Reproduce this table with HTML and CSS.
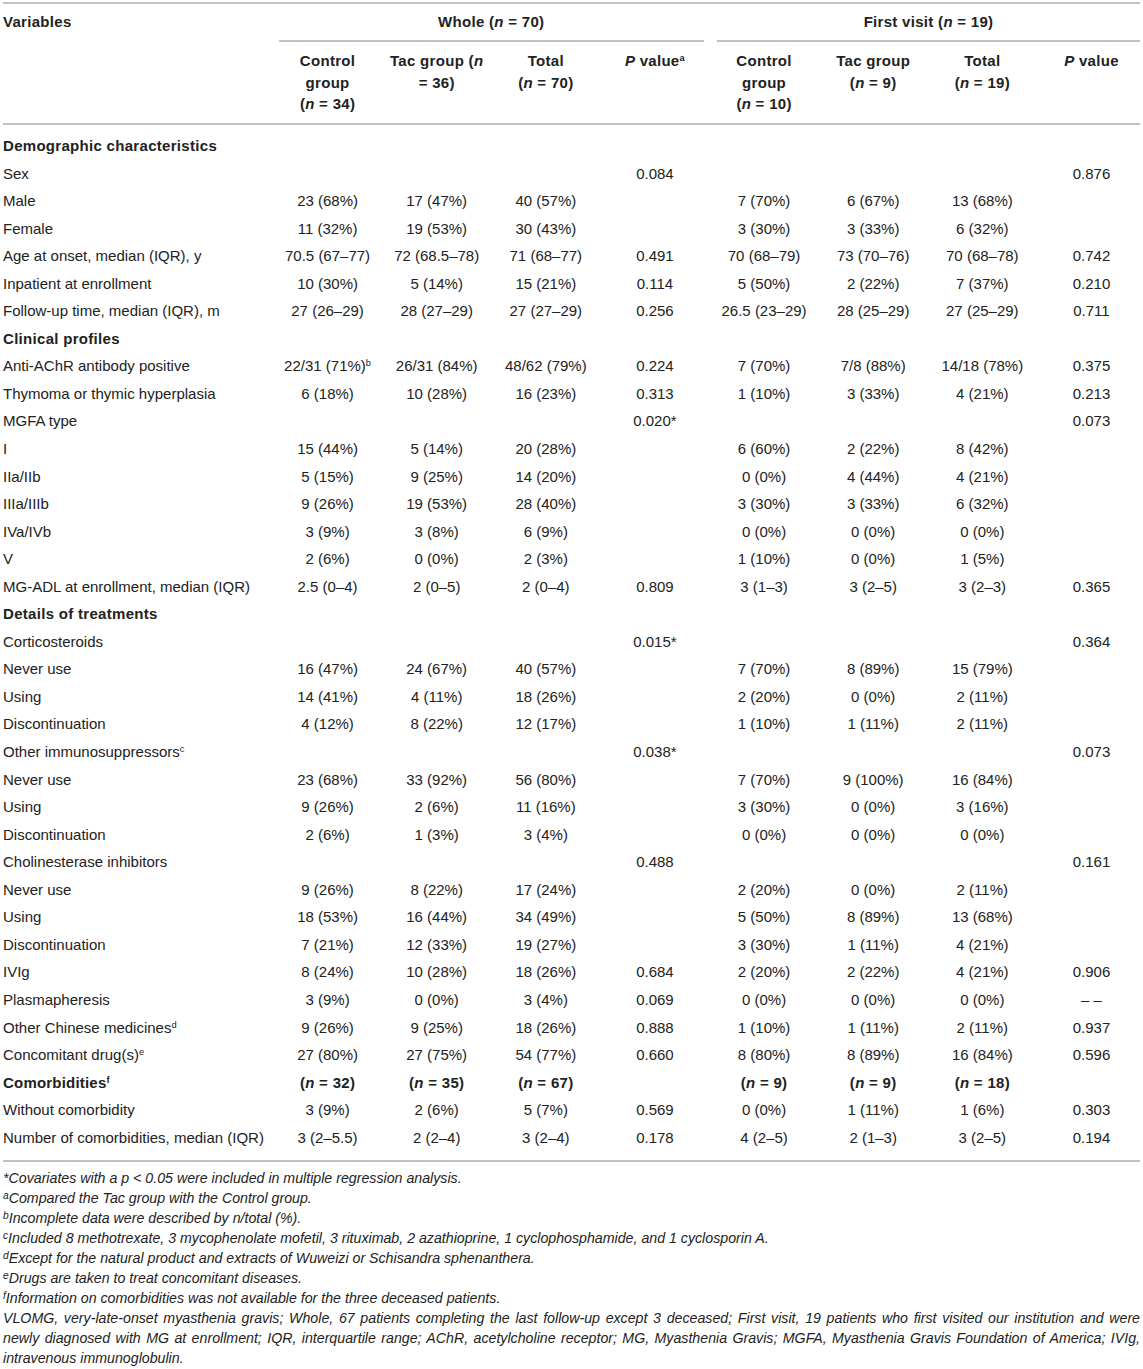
FILE: index.html
```html
<!DOCTYPE html>
<html lang="en">
<head>
<meta charset="utf-8">
<title>Table</title>
<link rel="stylesheet" href="styles.css">
</head>
<body>
<div class="page">
<table class="tbl">
<colgroup>
<col class="w-var"><col class="wc"><col class="wc"><col class="wc"><col class="wc"><col class="wc"><col class="wc"><col class="wc"><col class="wc">
</colgroup>
<thead>
<tr class="top">
<th rowspan="2" class="var">Variables</th>
<th colspan="4" class="grpcell"><div class="grp">Whole (<i>n</i> = 70)</div></th>
<th colspan="4" class="grpcell grpcell-first"><div class="grp">First visit (<i>n</i> = 19)</div></th>
</tr>
<tr class="sub">
<th>Control<br>group<br>(<i>n</i> = 34)</th>
<th>Tac group (<i>n</i><br>= 36)</th>
<th>Total<br>(<i>n</i> = 70)</th>
<th><i>P</i> value<sup>a</sup></th>
<th>Control<br>group<br>(<i>n</i> = 10)</th>
<th>Tac group<br>(<i>n</i> = 9)</th>
<th>Total<br>(<i>n</i> = 19)</th>
<th><i>P</i> value</th>
</tr>
</thead>
<tbody>
<tr class="sec"><td colspan="9">Demographic characteristics</td></tr>
<tr><td>Sex</td><td></td><td></td><td></td><td>0.084</td><td></td><td></td><td></td><td>0.876</td></tr>
<tr><td>Male</td><td>23 (68%)</td><td>17 (47%)</td><td>40 (57%)</td><td></td><td>7 (70%)</td><td>6 (67%)</td><td>13 (68%)</td><td></td></tr>
<tr><td>Female</td><td>11 (32%)</td><td>19 (53%)</td><td>30 (43%)</td><td></td><td>3 (30%)</td><td>3 (33%)</td><td>6 (32%)</td><td></td></tr>
<tr><td>Age at onset, median (IQR), y</td><td>70.5 (67–77)</td><td>72 (68.5–78)</td><td>71 (68–77)</td><td>0.491</td><td>70 (68–79)</td><td>73 (70–76)</td><td>70 (68–78)</td><td>0.742</td></tr>
<tr><td>Inpatient at enrollment</td><td>10 (30%)</td><td>5 (14%)</td><td>15 (21%)</td><td>0.114</td><td>5 (50%)</td><td>2 (22%)</td><td>7 (37%)</td><td>0.210</td></tr>
<tr><td>Follow-up time, median (IQR), m</td><td>27 (26–29)</td><td>28 (27–29)</td><td>27 (27–29)</td><td>0.256</td><td>26.5 (23–29)</td><td>28 (25–29)</td><td>27 (25–29)</td><td>0.711</td></tr>
<tr class="sec"><td colspan="9">Clinical profiles</td></tr>
<tr><td>Anti-AChR antibody positive</td><td>22/31 (71%)<sup>b</sup></td><td>26/31 (84%)</td><td>48/62 (79%)</td><td>0.224</td><td>7 (70%)</td><td>7/8 (88%)</td><td>14/18 (78%)</td><td>0.375</td></tr>
<tr><td>Thymoma or thymic hyperplasia</td><td>6 (18%)</td><td>10 (28%)</td><td>16 (23%)</td><td>0.313</td><td>1 (10%)</td><td>3 (33%)</td><td>4 (21%)</td><td>0.213</td></tr>
<tr><td>MGFA type</td><td></td><td></td><td></td><td>0.020*</td><td></td><td></td><td></td><td>0.073</td></tr>
<tr><td>I</td><td>15 (44%)</td><td>5 (14%)</td><td>20 (28%)</td><td></td><td>6 (60%)</td><td>2 (22%)</td><td>8 (42%)</td><td></td></tr>
<tr><td>IIa/IIb</td><td>5 (15%)</td><td>9 (25%)</td><td>14 (20%)</td><td></td><td>0 (0%)</td><td>4 (44%)</td><td>4 (21%)</td><td></td></tr>
<tr><td>IIIa/IIIb</td><td>9 (26%)</td><td>19 (53%)</td><td>28 (40%)</td><td></td><td>3 (30%)</td><td>3 (33%)</td><td>6 (32%)</td><td></td></tr>
<tr><td>IVa/IVb</td><td>3 (9%)</td><td>3 (8%)</td><td>6 (9%)</td><td></td><td>0 (0%)</td><td>0 (0%)</td><td>0 (0%)</td><td></td></tr>
<tr><td>V</td><td>2 (6%)</td><td>0 (0%)</td><td>2 (3%)</td><td></td><td>1 (10%)</td><td>0 (0%)</td><td>1 (5%)</td><td></td></tr>
<tr><td>MG-ADL at enrollment, median (IQR)</td><td>2.5 (0–4)</td><td>2 (0–5)</td><td>2 (0–4)</td><td>0.809</td><td>3 (1–3)</td><td>3 (2–5)</td><td>3 (2–3)</td><td>0.365</td></tr>
<tr class="sec"><td colspan="9">Details of treatments</td></tr>
<tr><td>Corticosteroids</td><td></td><td></td><td></td><td>0.015*</td><td></td><td></td><td></td><td>0.364</td></tr>
<tr><td>Never use</td><td>16 (47%)</td><td>24 (67%)</td><td>40 (57%)</td><td></td><td>7 (70%)</td><td>8 (89%)</td><td>15 (79%)</td><td></td></tr>
<tr><td>Using</td><td>14 (41%)</td><td>4 (11%)</td><td>18 (26%)</td><td></td><td>2 (20%)</td><td>0 (0%)</td><td>2 (11%)</td><td></td></tr>
<tr><td>Discontinuation</td><td>4 (12%)</td><td>8 (22%)</td><td>12 (17%)</td><td></td><td>1 (10%)</td><td>1 (11%)</td><td>2 (11%)</td><td></td></tr>
<tr><td>Other immunosuppressors<sup>c</sup></td><td></td><td></td><td></td><td>0.038*</td><td></td><td></td><td></td><td>0.073</td></tr>
<tr><td>Never use</td><td>23 (68%)</td><td>33 (92%)</td><td>56 (80%)</td><td></td><td>7 (70%)</td><td>9 (100%)</td><td>16 (84%)</td><td></td></tr>
<tr><td>Using</td><td>9 (26%)</td><td>2 (6%)</td><td>11 (16%)</td><td></td><td>3 (30%)</td><td>0 (0%)</td><td>3 (16%)</td><td></td></tr>
<tr><td>Discontinuation</td><td>2 (6%)</td><td>1 (3%)</td><td>3 (4%)</td><td></td><td>0 (0%)</td><td>0 (0%)</td><td>0 (0%)</td><td></td></tr>
<tr><td>Cholinesterase inhibitors</td><td></td><td></td><td></td><td>0.488</td><td></td><td></td><td></td><td>0.161</td></tr>
<tr><td>Never use</td><td>9 (26%)</td><td>8 (22%)</td><td>17 (24%)</td><td></td><td>2 (20%)</td><td>0 (0%)</td><td>2 (11%)</td><td></td></tr>
<tr><td>Using</td><td>18 (53%)</td><td>16 (44%)</td><td>34 (49%)</td><td></td><td>5 (50%)</td><td>8 (89%)</td><td>13 (68%)</td><td></td></tr>
<tr><td>Discontinuation</td><td>7 (21%)</td><td>12 (33%)</td><td>19 (27%)</td><td></td><td>3 (30%)</td><td>1 (11%)</td><td>4 (21%)</td><td></td></tr>
<tr><td>IVIg</td><td>8 (24%)</td><td>10 (28%)</td><td>18 (26%)</td><td>0.684</td><td>2 (20%)</td><td>2 (22%)</td><td>4 (21%)</td><td>0.906</td></tr>
<tr><td>Plasmapheresis</td><td>3 (9%)</td><td>0 (0%)</td><td>3 (4%)</td><td>0.069</td><td>0 (0%)</td><td>0 (0%)</td><td>0 (0%)</td><td>– –</td></tr>
<tr><td>Other Chinese medicines<sup>d</sup></td><td>9 (26%)</td><td>9 (25%)</td><td>18 (26%)</td><td>0.888</td><td>1 (10%)</td><td>1 (11%)</td><td>2 (11%)</td><td>0.937</td></tr>
<tr><td>Concomitant drug(s)<sup>e</sup></td><td>27 (80%)</td><td>27 (75%)</td><td>54 (77%)</td><td>0.660</td><td>8 (80%)</td><td>8 (89%)</td><td>16 (84%)</td><td>0.596</td></tr>
<tr class="bold"><td>Comorbidities<sup>f</sup></td><td>(<i>n</i> = 32)</td><td>(<i>n</i> = 35)</td><td>(<i>n</i> = 67)</td><td></td><td>(<i>n</i> = 9)</td><td>(<i>n</i> = 9)</td><td>(<i>n</i> = 18)</td><td></td></tr>
<tr><td>Without comorbidity</td><td>3 (9%)</td><td>2 (6%)</td><td>5 (7%)</td><td>0.569</td><td>0 (0%)</td><td>1 (11%)</td><td>1 (6%)</td><td>0.303</td></tr>
<tr><td>Number of comorbidities, median (IQR)</td><td>3 (2–5.5)</td><td>2 (2–4)</td><td>3 (2–4)</td><td>0.178</td><td>4 (2–5)</td><td>2 (1–3)</td><td>3 (2–5)</td><td>0.194</td></tr>
</tbody>
</table>
<div class="notes">
<p>*Covariates with a <i>p</i> &lt; 0.05 were included in multiple regression analysis.</p>
<p><sup>a</sup>Compared the Tac group with the Control group.</p>
<p><sup>b</sup>Incomplete data were described by n/total (%).</p>
<p><sup>c</sup>Included 8 methotrexate, 3 mycophenolate mofetil, 3 rituximab, 2 azathioprine, 1 cyclophosphamide, and 1 cyclosporin A.</p>
<p><sup>d</sup>Except for the natural product and extracts of Wuweizi or Schisandra sphenanthera.</p>
<p><sup>e</sup>Drugs are taken to treat concomitant diseases.</p>
<p><sup>f</sup>Information on comorbidities was not available for the three deceased patients.</p>
<p class="abbr"><span class="jl">VLOMG, very-late-onset myasthenia gravis; Whole, 67 patients completing the last follow-up except 3 deceased; First visit, 19 patients who first visited our institution and were</span><span class="jl">newly diagnosed with MG at enrollment; IQR, interquartile range; AChR, acetylcholine receptor; MG, Myasthenia Gravis; MGFA, Myasthenia Gravis Foundation of America; IVIg,</span><span>intravenous immunoglobulin.</span></p>
</div>
</div>
</body>
</html>
```
FILE: styles.css
```css
* { box-sizing: border-box; }
html, body { margin: 0; padding: 0; background: #ffffff; }
body {
  font-family: "Liberation Sans", Arial, sans-serif;
  color: #222222;
}
.page { padding: 2px 3px 0 3px; }

.tbl {
  width: 1137px;
  table-layout: fixed;
  border-collapse: separate;
  border-spacing: 0;
  border-top: 2px solid #c2c2c2;
  border-bottom: 2px solid #c2c2c2;
  font-size: 15px;
}
.w-var { width: 264px; }
.wc { width: 109.125px; }

sup { font-size: 0.62em; line-height: 0; vertical-align: 0.55em; }

th {
  font-weight: bold;
  letter-spacing: 0.3px;
  line-height: 21.5px;
  vertical-align: top;
}
th.var {
  text-align: left;
  padding: 7px 0 0 0;
  border-bottom: 2px solid #c2c2c2;
}
th.grpcell { padding: 0 0 0 12px; }
th.grpcell-first { padding-left: 13.5px; }
.grp {
  padding: 7px 0 7.5px;
  border-bottom: 2px solid #c2c2c2;
  text-align: center;
}

.sub th {
  text-align: center;
  padding: 8px 0 8.5px 12px;
  border-bottom: 2px solid #c2c2c2;
  white-space: nowrap;
}

td {
  padding: 0 0 0 12px;
  line-height: 27.55px;
  white-space: nowrap;
  text-align: center;
  vertical-align: top;
}
td:first-child { text-align: left; padding-left: 0; }

.sec td, .bold td { font-weight: bold; letter-spacing: 0.3px; }
.bold td:first-child { letter-spacing: 0.2px; }
tbody tr:first-child td { padding-top: 7px; }
tbody tr:last-child td { padding-bottom: 9px; }

.notes {
  margin-top: 6px;
  font-size: 14.2px;
  font-style: italic;
  line-height: 20px;
}
.notes p { margin: 0; }
.notes sup { font-size: 0.72em; vertical-align: 0.4em; }
.abbr span { display: block; }
.abbr .jl { text-align: justify; text-align-last: justify; }
```
